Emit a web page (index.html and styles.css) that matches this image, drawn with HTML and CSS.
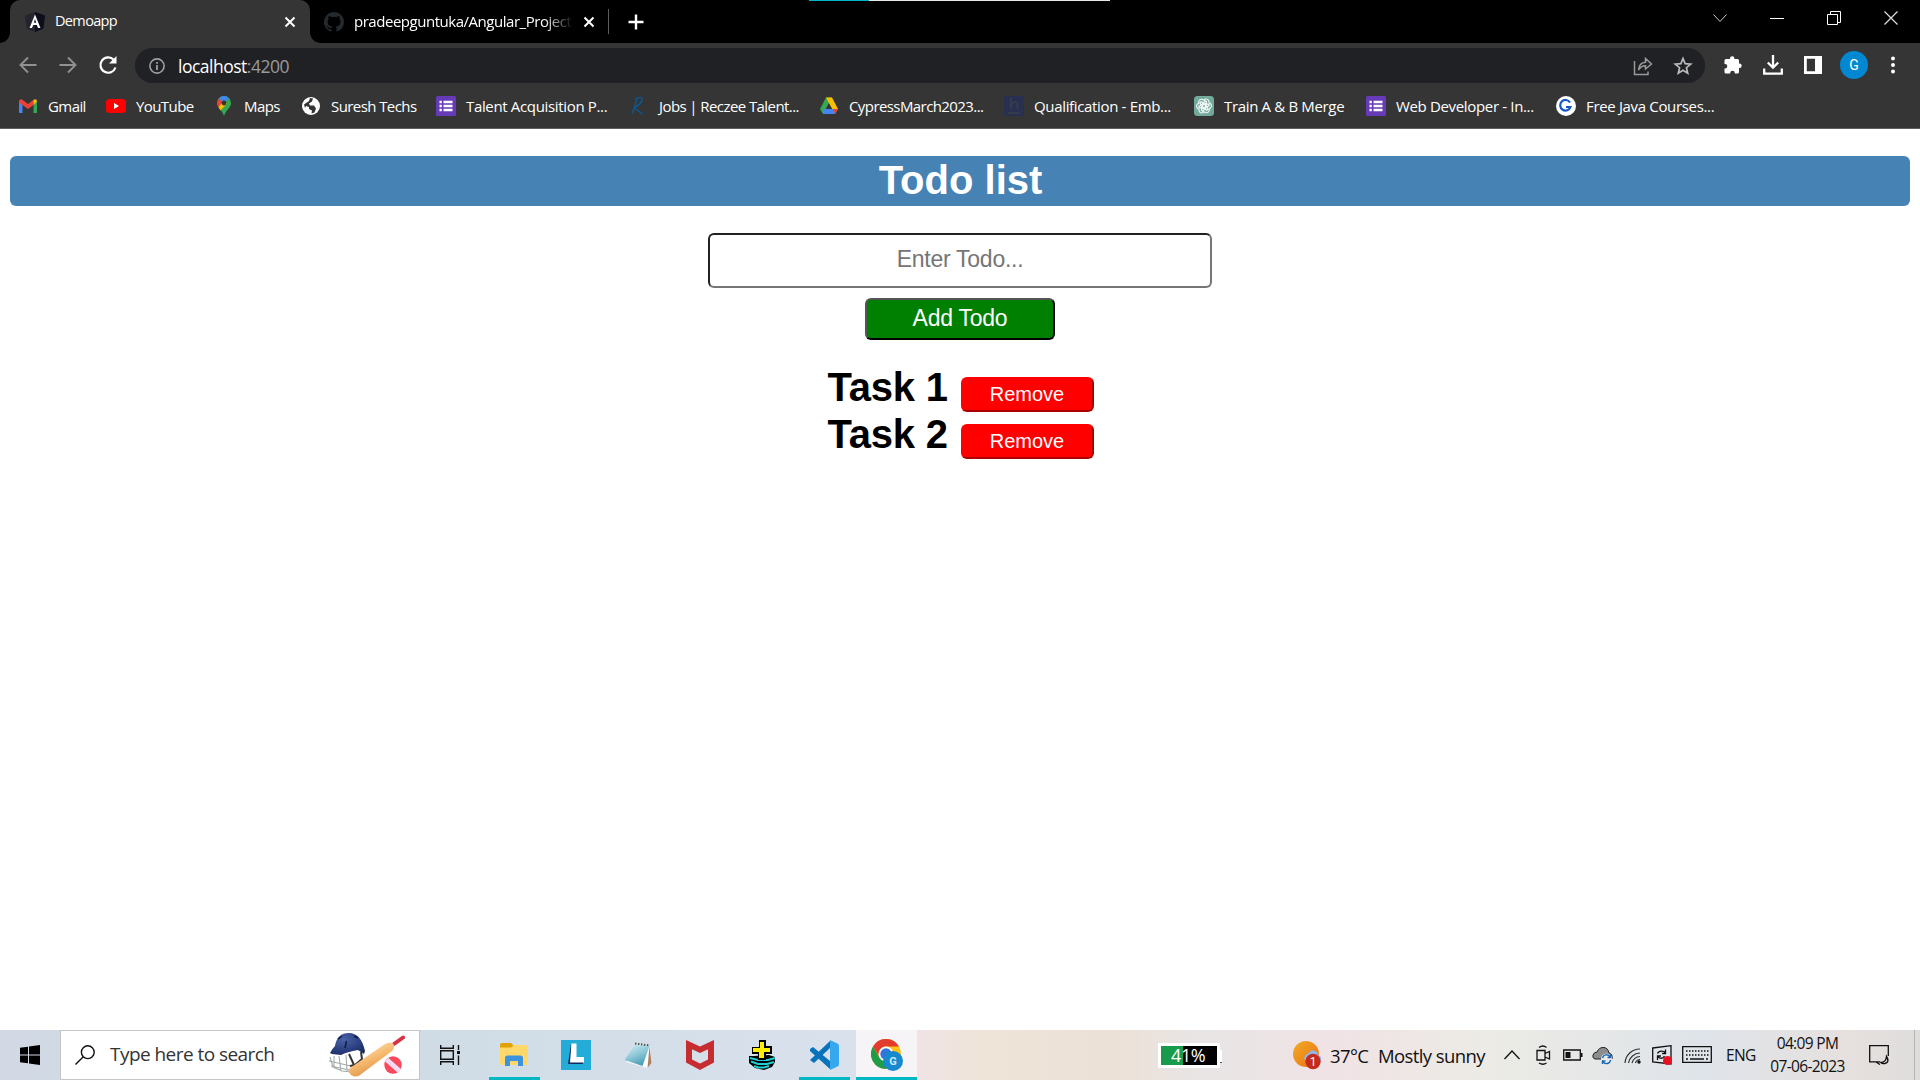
FILE: index.html
```html
<!DOCTYPE html>
<html lang="en">
<head>
<meta charset="utf-8">
<title>Demoapp</title>
<link rel="stylesheet" href="styles.css">
</head>
<body>
<header class="browser">
  <div class="loadbar"></div>
  <div class="tabs">
    <div class="tab active">
      <svg class="fav" width="20" height="20" viewBox="0 0 20 20"><path d="M10 0 20 3.5 18.4 16.500 10 20 1.600 16.500 0 3.500Z" fill="#23242c"/><path d="M10 0 20 3.500 18.400 16.500 10 20Z" fill="#0c0e1b"/><path d="M10 2.500 4.500 16h2.500l1.200-3h3.600l1.200 3h2.500ZM10 7l1.200 3.800H8.800Z" fill="#fff" fill-rule="evenodd"/></svg>
      <span class="tab-title t-demo">Demoapp</span>
      <svg class="x" width="12" height="12" viewBox="0 0 12 12"><path d="M1.500 1.500 10.500 10.500M10.500 1.500 1.500 10.500" stroke="#fff" stroke-width="2"/></svg>
    </div>
    <div class="tab">
      <svg class="fav" width="20" height="20" viewBox="0 0 16 16"><path fill="#24292e" d="M8 0C3.580 0 0 3.580 0 8c0 3.540 2.290 6.530 5.470 7.590.400.070.550-.170.550-.380 0-.190-.010-.820-.010-1.490-2.010.370-2.530-.490-2.690-.940-.090-.230-.480-.940-.820-1.130-.280-.150-.680-.520-.010-.530.630-.010 1.080.580 1.230.820.720 1.210 1.870.870 2.330.660.070-.520.280-.870.510-1.070-1.780-.200-3.640-.890-3.640-3.950 0-.870.310-1.590.820-2.150-.080-.200-.360-1.020.080-2.120 0 0 .670-.210 2.200.820a7.500 7.500 0 0 1 4 0c1.530-1.040 2.200-.820 2.200-.820.440 1.100.160 1.920.080 2.120.510.560.820 1.270.820 2.150 0 3.070-1.870 3.750-3.650 3.950.290.250.540.730.540 1.480 0 1.070-.010 1.930-.010 2.200 0 .210.150.460.550.380A8 8 0 0 0 16 8c0-4.420-3.580-8-8-8Z"/></svg>
      <span class="tab-title t-git">pradeepguntuka/Angular_Project</span>
      <svg class="x" width="12" height="12" viewBox="0 0 12 12"><path d="M1.500 1.500 10.500 10.500M10.500 1.500 1.500 10.500" stroke="#fff" stroke-width="2"/></svg>
    </div>
    <i class="sep"></i>
    <svg class="plus" width="16" height="16" viewBox="0 0 16 16"><path d="M8 0.500V15.500M.500 8H15.500" stroke="#fff" stroke-width="2.400"/></svg>
    <div class="winctl">
      <svg width="14" height="14" viewBox="0 0 14 14"><path d="M.500 3.500 7 10.500 13.500 3.500" fill="none" stroke="#ccc"/></svg>
      <svg width="14" height="14" viewBox="0 0 14 14"><path d="M0 7.500H14" stroke="#fff"/></svg>
      <svg width="14" height="14" viewBox="0 0 14 14"><path d="M.500 3.500h10v10H.500ZM3.500 3V.500h10V11.500H11" fill="none" stroke="#fff"/></svg>
      <svg width="14" height="14" viewBox="0 0 14 14"><path d="M.500.500 13.500 13.500M13.500.500.500 13.500" stroke="#ddd" stroke-width="1.200"/></svg>
    </div>
  </div>
  <div class="toolbar">
    <div class="nav">
      <svg width="20" height="20" viewBox="0 0 20 20"><path d="M18.500 10H3M10 2.500 2.500 10l7.500 7.500" fill="none" stroke="#919191" stroke-width="1.900"/></svg>
      <svg width="20" height="20" viewBox="0 0 20 20"><path d="M1.500 10H17M10 2.500 17.500 10 10 17.500" fill="none" stroke="#919191" stroke-width="1.900"/></svg>
      <svg width="20" height="20" viewBox="0 0 20 20"><path d="M17.500 12.500A7.700 7.700 0 1 1 15.800 4.700" fill="none" stroke="#fff" stroke-width="2.200"/><path d="M18.500 1V8.500H11Z" fill="#fff"/></svg>
    </div>
    <div class="omnibox">
      <svg width="16" height="16" viewBox="0 0 16 16"><circle cx="8" cy="8" r="7.100" fill="none" stroke="#9aa0a6" stroke-width="1.600"/><path d="M8 7v5M8 4v1.800" stroke="#9aa0a6" stroke-width="1.800"/></svg>
      <span class="url">localhost<span>:4200</span></span>
      <svg class="share" width="20" height="20" viewBox="0 0 20 20"><path d="M1.500 5V18.500H15V15.500" fill="none" stroke="#999" stroke-width="1.500"/><path d="M5.500 14C6 9 8.500 6.500 12.500 6.300V2.500L18.500 8l-6 5V9.800C9 9.900 7 11.500 5.500 14Z" fill="none" stroke="#999" stroke-width="1.500"/></svg>
      <svg width="20" height="20" viewBox="0 0 20 20"><path d="M10 2.500 12.100 7.600 17.700 8.100 13.400 11.700 14.700 17.200 10 14.300 5.300 17.200 6.600 11.700 2.300 8.100 7.900 7.600Z" fill="none" stroke="#bbb" stroke-width="1.700"/></svg>
    </div>
    <div class="ext">
      <svg width="20" height="20" viewBox="0 0 20 20"><path d="M7 4V3.500a2.200 2.200 0 0 1 4.400 0V4H14.500Q16 4 16 5.500V8.500h.500a2.200 2.200 0 0 1 0 4.400H16V17q0 1.500-1.500 1.500H11.800V18a2.300 2.300 0 0 0-4.600 0v.500H3Q1.500 18.500 1.500 17V13.500H2a2.300 2.300 0 0 0 0-4.600H1.500V5.500Q1.500 4 3 4Z" fill="#fff"/></svg>
      <svg width="20" height="20" viewBox="0 0 20 20"><path d="M10 0V12M4.800 7.500 10 12.700 15.200 7.500M1.200 13.500V18.700H18.800V13.500" fill="none" stroke="#fff" stroke-width="2.300"/></svg>
      <svg width="20" height="20" viewBox="0 0 20 20"><path d="M1 1H19V19H1ZM3.800 3.800V16.200H12V3.800Z" fill="#fff" fill-rule="evenodd"/></svg>
      <b class="avatar">G</b>
      <svg class="dots" width="20" height="20" viewBox="0 0 20 20"><circle cx="10" cy="3.500" r="2" fill="#fff"/><circle cx="10" cy="10" r="2" fill="#fff"/><circle cx="10" cy="16.500" r="2" fill="#fff"/></svg>
    </div>
  </div>
  <nav class="bookmarks">
    <a class="snug"><svg width="20" height="20" viewBox="0 0 20 20"><path d="M1 4.500V17h3.500V9Z" fill="#4285f4"/><path d="M19 4.500V17h-3.500V9Z" fill="#34a853"/><path d="M1 5Q1.500 2.500 4 3.500L10 8 16 3.500 15.500 9 10 13 1 6.500Z" fill="#ea4335"/><path d="M15.500 4Q18.500 2 19 5.500L15.500 9Z" fill="#fbbc04"/></svg><span>Gmail</span></a>
    <a class="snug"><svg width="20" height="20" viewBox="0 0 20 20"><rect y="3" width="20" height="14" rx="3.500" fill="#f00"/><path d="M8 7v6l5-3Z" fill="#fff"/></svg><span>YouTube</span></a>
    <a class="snug"><svg width="20" height="20" viewBox="0 0 20 20"><path d="M3 7a7 7 0 0 1 14 0C17 12 12 13.500 10 20 8 13.500 3 12 3 7Z" fill="#34a853"/><path d="M5 2.500 10 7 5.500 12Q1.500 8 5 2.500Z" fill="#ea4335"/><path d="M5 2.200A7 7 0 0 1 15 2.200L10 7Z" fill="#4285f4"/><path d="M4.500 11 10 5l3 2.500-6.500 7Z" fill="#fbbc04"/><circle cx="10" cy="7" r="2.400" fill="#353535"/></svg><span>Maps</span></a>
    <a class="snug"><svg width="20" height="20" viewBox="0 0 20 20"><circle cx="10" cy="10" r="9" fill="#fff"/><path d="M3 8.500 8 5l1-3 3 .500-1 3-3 2 1 2h4l2 3-1.500 4-3 1 .5-3-3-1.500V11L5 10l-1 2Z" fill="#353535"/></svg><span>Suresh Techs</span></a>
    <a><svg width="20" height="20" viewBox="0 0 20 20"><rect width="20" height="20" rx="1.500" fill="#673ab7"/><path d="M7.500 6H16.500M7.500 10H16.500M7.500 14H16.500M3.500 6H5.800M3.500 10H5.800M3.500 14H5.800" stroke="#fff" stroke-width="2.300"/></svg><span>Talent Acquisition P...</span></a>
    <a class="snug"><svg width="20" height="20" viewBox="0 0 20 20"><path d="M6 3.500Q14-.500 13 4T5 11.500M8 4 3 18M6 12l8 6.500" fill="none" stroke="#0d5790" stroke-width="1.500"/></svg><span>Jobs | Reczee Talent...</span></a>
    <a class="snug"><svg width="20" height="20" viewBox="0 0 20 20"><path d="M7 1.500H13L4 18 1 13Z" fill="#34a853"/><path d="M7 1.500H13L19 13H13Z" fill="#fbbc04"/><path d="M4 13H19L16 18H4Z" fill="#4285f4"/><path d="M14 13H19L16 18Z" fill="#ea4335"/><path d="M10 7.500 7 13H13Z" fill="#353535"/></svg><span>CypressMarch2023...</span></a>
    <a><svg width="20" height="20" viewBox="0 0 20 20"><rect width="20" height="20" fill="#28304f"/><path d="M7 2V13M7 9Q12 3 13.500 8V13M4 17H16" fill="none" stroke="#353b4c" stroke-width="2"/></svg><span>Qualification - Emb...</span></a>
    <a><svg width="20" height="20" viewBox="0 0 20 20"><rect width="20" height="20" rx="3.500" fill="#74aa9c"/><g fill="none" stroke="#eef6f3" stroke-width="1.100"><path id="petal" d="M10 3.500Q14 2 15 5.500V10L10 12.500 8.500 11.500V7L12 5"/><use href="#petal" transform="rotate(60 10 10)"/><use href="#petal" transform="rotate(120 10 10)"/><use href="#petal" transform="rotate(180 10 10)"/><use href="#petal" transform="rotate(240 10 10)"/><use href="#petal" transform="rotate(300 10 10)"/></g></svg><span>Train A &amp; B Merge</span></a>
    <a><svg width="20" height="20" viewBox="0 0 20 20"><rect width="20" height="20" rx="1.500" fill="#673ab7"/><path d="M7.500 6H16.500M7.500 10H16.500M7.500 14H16.500M3.500 6H5.800M3.500 10H5.800M3.500 14H5.800" stroke="#fff" stroke-width="2.300"/></svg><span>Web Developer - In...</span></a>
    <a><svg width="20" height="20" viewBox="0 0 20 20"><circle cx="10" cy="10" r="10" fill="#fff"/><path d="M14 6.500A5.300 5.300 0 1 0 14.500 11H10" fill="none" stroke="#1457c8" stroke-width="2.200"/></svg><span>Free Java Courses...</span></a>
  </nav>
</header>

<main class="page">
  <h1 class="title">Todo list</h1>
  <input class="todo-input" type="text" placeholder="Enter Todo...">
  <button class="add">Add Todo</button>
  <ul class="tasks">
    <li><span>Task 1</span><button class="remove">Remove</button></li>
    <li><span>Task 2</span><button class="remove">Remove</button></li>
  </ul>
</main>

<footer class="taskbar">
  <div class="start"><svg width="20" height="20" viewBox="0 0 20 20"><path d="M0 2.800 8 1.700V9.500H0ZM9 1.500 20 0V9.500H9ZM0 10.500H8V18.300L0 17.200ZM9 10.500H20V20L9 18.500Z"/></svg></div>
  <div class="search">
    <svg width="20" height="20" viewBox="0 0 20 20"><circle cx="12.800" cy="7.200" r="6.400" fill="none" stroke="#111" stroke-width="1.400"/><path d="M8.300 11.700.500 19.500" stroke="#111" stroke-width="1.400"/></svg>
    <span class="hint">Type here to search</span>
    <svg class="cricket" width="76" height="46" viewBox="0 0 76 46"><defs><linearGradient id="bat" x1="0.300" y1="0.200" x2="0.700" y2="0.900"><stop offset="0" stop-color="#ffd69b"/><stop offset=".5" stop-color="#f3b468"/><stop offset="1" stop-color="#d98f45"/></linearGradient><radialGradient id="helm" cx=".4" cy=".3" r=".8"><stop offset="0" stop-color="#4a64a8"/><stop offset=".6" stop-color="#2b3f80"/><stop offset="1" stop-color="#1c2b5c"/></radialGradient></defs><path d="M1 25 4 35 13 39 22 40M0 29 22 34M5 24V35M10 24 12 39M17 23 18 39M2 34 20 38" fill="none" stroke="#a3aaa9" stroke-width="1.100"/><path d="M32 20 33 27 26 33 21 34M20 22 25 33" fill="none" stroke="#333" stroke-width="2"/><path d="M1 21Q3 17 6 14 8 1 20 1T36 19L35 22 29 18Q18 20 12 23L3 22Z" fill="url(#helm)"/><path d="M17.500 9 16 16M13 4 9 7M25 4 29 6" stroke="#101b3c" stroke-width="1.500"/><path d="M65 12 74 5.500" stroke="#d63445" stroke-width="4" stroke-linecap="round"/><path d="M56 12Q62 9 64.500 12 66 16 63 19L31 43Q27 46 22 43 18 39 21 36Z" fill="url(#bat)"/><circle cx="64" cy="33" r="8.700" fill="#f94a5c"/><path d="M57.500 27.500 70.500 39" stroke="#f7dbf5" stroke-width="5"/></svg>
  </div>
  <div class="taskview"><svg width="20" height="20" viewBox="0 0 20 20" fill="none" stroke="#111" stroke-width="1.400"><path d="M.700 0V3.300H13.300V0M.700 20V16.700H13.300V20M.700 5.700H13.300V14.300H.700ZM18.500 0V5M18.500 10.500V20"/><path d="M17 6h3v3h-3Z" fill="#111" stroke="none"/></svg></div>
  <div class="apps">
    <div class="app running"><svg width="28" height="24" viewBox="0 0 28 24"><path d="M0 2Q0 0 2 0H11L14 3V6H0Z" fill="#e2a100"/><path d="M0 4.500H11L14 2H26Q28 2 28 4V20Q28 22 26 22H2Q0 22 0 20Z" fill="#ffd869"/><path d="M5 23V15Q5 12.500 7.500 12.500H20.500Q23 12.500 23 15V23H18V18H10V23Z" fill="#3c92df"/></svg></div>
    <div class="app"><svg width="30" height="30" viewBox="0 0 30 30"><path d="M0 0H30V30H0Z" fill="#24acd9"/><path d="M10 3.500 7 24H22V22H10Z" fill="#122c62"/><path d="M10.500 3.500H15.500V17H23V22.500H9Z" fill="#fff"/></svg></div>
    <div class="app"><svg width="30" height="28" viewBox="0 0 30 28"><defs><linearGradient id="note" x1="0" y1="0" x2="0.500" y2="1"><stop offset="0" stop-color="#dff2f5"/><stop offset=".6" stop-color="#8ac6d6"/><stop offset="1" stop-color="#4d9fb9"/></linearGradient></defs><path d="M14 3 27 4.500 28.500 22 24.500 27 3 21Z" fill="#fbfbfb"/><path d="M26.500 5 28.500 22 24.500 27Z" fill="#aa8262"/><path d="M12.500 3 26.500 5 19.500 25 1.500 19Z" fill="url(#note)"/><path d="M12 2.500 27 4.500" stroke="#555" stroke-width="2" stroke-dasharray="1.500 1.500"/></svg></div>
    <div class="app"><svg width="28" height="30" viewBox="0 0 28 30"><path d="M0 0 14 6.500 28 0V22.500L14 30 0 22.500ZM6 9.200V19.500L14 23.500 22 19.500V9.200L14 13Z" fill="#c62d31" fill-rule="evenodd"/></svg></div>
    <div class="app"><svg width="30" height="30" viewBox="0 0 30 30"><path d="M2 16H8L22 15 28 17V22L25 27 17 30 8 28 2 23Z" fill="#000"/><path d="M3 18 11 20H21L28 18M4 21.500 11 24H20L27 22M7 26 11 27.500H17L22 26" fill="none" stroke="#20cdd2" stroke-width="2"/><path d="M12 0H19V6H25V14H19V20H11V14H5V7H12Z" fill="#000"/><path d="M13 2H17V8H23V12H17V18H12V12H6V8H13Z" fill="#ffee00"/></svg></div>
    <div class="app running"><svg width="30" height="30" viewBox="0 0 30 30"><path d="M1 20 21 1V8L5 23ZM1 9 4 7 21 21V29L1 11Z" fill="#0873ba"/><path d="M21 0 28.500 3.500Q30 4 30 6V24Q30 26 28.500 26.500L21 30Z" fill="#35a8f0"/></svg></div>
    <div class="app running current"><svg width="32" height="32" viewBox="0 0 32 32"><circle cx="15" cy="15" r="15" fill="#fbc116"/><path d="M2 7.500A15 15 0 0 1 28 7.500H15A7.500 7.500 0 0 0 8.500 18Z" fill="#e33b2e"/><path d="M2 7.500A15 15 0 0 0 15 30L22 18.700 8.500 18.700Z" fill="#209b48"/><circle cx="15" cy="15" r="7.500" fill="#fff"/><circle cx="15" cy="15" r="5.700" fill="#3373dc"/><circle cx="22" cy="22" r="10" fill="#1689cf"/><text x="22" y="26" text-anchor="middle" class="badge">G</text></svg></div>
  </div>
  <div class="power"><i></i><span>41%</span></div>
  <div class="weather">
    <svg width="29" height="29" viewBox="0 0 29 29"><defs><linearGradient id="sun" x1="0" y1="0" x2="1" y2="1"><stop offset="0" stop-color="#f0ad28"/><stop offset="1" stop-color="#ed6e10"/></linearGradient></defs><circle cx="13" cy="13" r="13" fill="url(#sun)"/><path d="M11 18Q12 13 16 12 18 8 22 10 25 11 25 14 29 15 28 20L16 21Z" fill="#8eb9ef"/><circle cx="20" cy="20.500" r="7.700" fill="#c42b1c"/><text x="20" y="25" text-anchor="middle" class="count">1</text></svg>
    <span class="temp">37°C</span><span class="sky">Mostly sunny</span>
  </div>
  <div class="tray">
    <svg width="16" height="20" viewBox="0 0 16 20"><path d="M.500 14 8 6 15.500 14" fill="none" stroke="#111" stroke-width="1.300"/></svg>
    <svg width="16" height="20" viewBox="0 0 16 20"><path d="M2 5.500H10V15H2ZM10 8.500 14.500 6.500V14L10 12M4 2.500Q8-.500 11.500 2.500M4 18Q8 20.500 11.500 18" fill="none" stroke="#111" stroke-width="1.300"/></svg>
    <svg width="20" height="20" viewBox="0 0 20 20"><path d="M.700 5H17.300V15H.700Z" fill="none" stroke="#111" stroke-width="1.300"/><path d="M2.500 7H7.500V13H2.500ZM18 8H19.500V12H18Z" fill="#111"/></svg>
    <svg width="22" height="20" viewBox="0 0 22 20"><path d="M3 14Q0 13 1 10 2 7 5 7 7 2 12 2.500 16 3 17 8 21 9 20 14Z" fill="#8c8c8c" stroke="#222"/><circle cx="14.500" cy="14" r="5.500" fill="#eaeaea"/><path d="M10.500 13A4 4 0 0 1 18 12M18.500 9.500V12.500H15.500M18.500 15A4 4 0 0 1 11 16.500M10.500 19V16H13.500" fill="none" stroke="#1767b6" stroke-width="1.400"/></svg>
    <svg width="18" height="20" viewBox="0 0 18 20"><path d="M1 18A15 15 0 0 1 16 4M4.500 18A12 12 0 0 1 16 8M8 18A9 9 0 0 1 16 11.500M11.500 18A5 5 0 0 1 16 14.500" fill="none" stroke="#333" stroke-width="1.200"/><circle cx="15" cy="17" r="1.700" fill="#111"/></svg>
    <svg width="20" height="20" viewBox="0 0 20 20"><path d="M.700 3 19 .700V19L.700 17Z" fill="none" stroke="#111" stroke-width="1.300"/><path d="M5.500 8.500Q7 5 12 6.500L13 8M13.500 4.500V8.500H10M12.500 11Q11 14 7.500 13L6 11.500M5.500 15V11H9" fill="none" stroke="#111" stroke-width="1.300"/><circle cx="15.500" cy="15.500" r="4.500" fill="#e81123"/></svg>
    <svg width="30" height="18" viewBox="0 0 30 18"><path d="M.700.700H29.300V16.300H.700Z" fill="none" stroke="#111" stroke-width="1.300"/><path d="M4 5H27M4 9H27" stroke="#111" stroke-width="1.500" stroke-dasharray="1.500 1.500"/><path d="M4 13H6M8 13H22M24 13H26" stroke="#111" stroke-width="1.300"/></svg>
    <span class="lang">ENG</span>
    <div class="clock"><span class="time">04:09 PM</span><span class="date">07-06-2023</span></div>
    <svg width="21" height="20" viewBox="0 0 21 20"><path d="M11 16.800 8 16.800H.700V.700H19.300V11M7 17 11 19.500" fill="none" stroke="#111" stroke-width="1.300"/><path d="M17.500 11.500Q21 17 16 18.500 13 19 12 17.500 17 17.500 17.500 11.500Z" fill="none" stroke="#111" stroke-width="1.400"/></svg>
    <i class="peek"></i>
  </div>
</footer>
</body>
</html>
```
FILE: styles.css
```css
* { box-sizing: border-box; }
body {
  margin: 0;
  width: 1920px;
  height: 1080px;
  display: flex;
  flex-direction: column;
  overflow: hidden;
  background: #fff;
  font-family: "Open Sans", "Noto Sans", sans-serif;
}
svg { display: block; flex: none; }
span { white-space: nowrap; }

/* browser frame */
.browser {
  position: relative;
  height: 129px;
  background: #353535;
  border-bottom: 1px solid #606060;
  color: #fff;
}
.loadbar {
  position: absolute;
  left: 809px;
  top: 0;
  width: 301px;
  height: 1px;
  background: linear-gradient(90deg, #00b7c3 60px, #e8e8e8 60px);
}
.tabs {
  display: flex;
  align-items: center;
  height: 43px;
  padding-left: 10px;
  background: #000;
}
.tab {
  display: flex;
  align-items: center;
  width: 298px;
  height: 43px;
  padding: 0 10px 0 14px;
}
.tab.active {
  position: relative;
  width: 300px;
  padding: 0 14px 0 15px;
  background: #353535;
  border-radius: 10px 10px 0 0;
}
.tab.active::before, .tab.active::after {
  content: "";
  position: absolute;
  bottom: 0;
  width: 10px;
  height: 10px;
}
.tab.active::before { left: -10px; background: radial-gradient(circle at 0 0, #000 9.5px, #353535 10px); }
.tab.active::after { right: -10px; background: radial-gradient(circle at 100% 0, #000 9.5px, #353535 10px); }
.tab-title { line-height: 20px; padding-bottom: 1px; margin-left: 10px; flex: none; }
.t-demo { width: 67px; font-size: 14.5px; letter-spacing: -0.65px; }
.t-git {
  width: 219px;
  overflow: hidden;
  font-size: 15px;
  letter-spacing: -0.47px;
  -webkit-mask-image: linear-gradient(90deg, #000 190px, transparent 219px);
  mask-image: linear-gradient(90deg, #000 190px, transparent 219px);
}
.tab .x { margin-left: auto; }
.tab:not(.active) .x { margin-left: 10px; }
.sep { width: 1px; height: 25px; background: #5c5c5c; }
.plus { margin-left: 19px; }
.winctl { display: flex; gap: 43px; margin: -7px 22px 0 auto; }

.toolbar { display: flex; align-items: center; height: 45px; }
.nav { display: flex; gap: 20px; width: 135px; padding: 0 0 1px 18px; }
.omnibox {
  display: flex;
  align-items: center;
  width: 1570px;
  height: 35px;
  padding: 0 12px 0 14px;
  border-radius: 18px;
  background: #202124;
}
.url { margin-left: 13px; font-size: 17.5px; letter-spacing: -0.5px; }
.url span { color: #9a9a9a; }
.share { margin: 0 20px 0 auto; }
.ext { display: flex; align-items: center; gap: 20px; padding: 0 0 1px 18px; }
.avatar {
  width: 28px;
  height: 28px;
  margin: 0 -4px 0 -3px;
  border-radius: 50%;
  background: #0288d1;
  font: 14px/28px Roboto, sans-serif;
  text-align: center;
}
.dots { margin-left: -1px; }

.bookmarks {
  display: grid;
  grid-template-columns: 88px 108px 87px 135px 193px 190px 185px 190px 172px 190px 180px;
  align-items: center;
  height: 35px;
  padding-left: 18px;
}
.bookmarks a { display: flex; align-items: center; gap: 10px; font-size: 15px; line-height: 20px; letter-spacing: -0.34px; }
.bookmarks .snug { letter-spacing: -0.58px; }

/* todo page */
.page {
  flex: 1;
  display: flex;
  flex-direction: column;
  align-items: center;
  padding: 27px 10px 0;
  font-family: "Liberation Sans", Arial, sans-serif;
}
.title {
  width: 1900px;
  height: 50px;
  margin: 0;
  padding-left: 1px;
  border-radius: 6px;
  background: #4682b4;
  color: #fff;
  font-size: 40px;
  line-height: 49px;
  text-align: center;
}
.todo-input {
  width: 504px;
  height: 55px;
  margin: 27px 0 10px;
  padding: 0 0 2px;
  border: 2px inset #767676;
  border-radius: 6px;
  font: 23px "Liberation Sans", Arial, sans-serif;
  letter-spacing: -0.25px;
  text-align: center;
}
.todo-input::placeholder { color: #757575; }
.add {
  width: 190px;
  height: 42px;
  padding: 0 0 2px;
  border: 2px outset #000;
  border-radius: 6px;
  background: #008000;
  color: #fff;
  font: 23px "Liberation Sans", Arial, sans-serif;
  letter-spacing: -0.25px;
}
.tasks { margin: 24px 0 0; padding: 0; list-style: none; }
.tasks li { display: flex; align-items: flex-start; height: 47px; padding-left: 1px; }
.tasks li span { width: 133px; font-size: 40px; font-weight: 700; line-height: 46px; letter-spacing: -0.2px; }
.remove {
  width: 133px;
  height: 35px;
  margin-top: 13px;
  padding: 0;
  border: 2px outset #f00;
  border-radius: 6px;
  background: #f00;
  color: #fff;
  font: 20px "Liberation Sans", Arial, sans-serif;
}

/* taskbar */
.taskbar {
  display: flex;
  align-items: center;
  height: 50px;
  background: linear-gradient(90deg, #d2d9e5 0, #cfdce6 420px, #d9e1ec 850px, #f0e3e5 920px, #efe4d8 985px, #ece1d6 1110px, #e8e5e5 1200px, #f0e3e5 1335px, #ecebe5 1490px, #dfe4ea 1700px, #e6e0de 1850px, #dedddc 1920px);
  color: #111;
}
.start { width: 60px; padding-left: 20px; }
.search {
  display: flex;
  align-items: center;
  width: 360px;
  height: 50px;
  padding: 0 14px 0 14px;
  border: 1px solid #c5c5c8;
  background: #fff;
}
.hint { margin-left: 15px; padding-bottom: 2px; font-size: 19px; letter-spacing: -0.55px; color: #333; }
.cricket { margin-left: auto; }
.taskview { width: 63px; padding-left: 20px; }
.apps { display: flex; height: 50px; }
.app { position: relative; display: flex; align-items: center; justify-content: center; width: 62px; }
.app.running::after {
  content: "";
  position: absolute;
  bottom: 0;
  left: 6px;
  width: 51px;
  height: 3px;
  background: #00b7c3;
}
.app.current { width: 61px; margin-left: 1px; background: #f7f4f7; }
.app.current::after { left: 0; width: 61px; }
.badge { font: bold 11px Roboto, sans-serif; fill: #cfeaff; }
.power {
  display: flex;
  position: relative;
  width: 62px;
  height: 25px;
  margin-left: 241px;
  border: 3px solid #fff;
  background: #000;
}
.power::after {
  content: "";
  position: absolute;
  right: -5px;
  top: 4px;
  width: 2px;
  height: 12px;
  background: #fff;
  border-bottom: 1px solid #555;
}
.power i { width: 22px; background: #189b4b; }
.power span { position: absolute; left: 10px; top: -3px; font-size: 18px; line-height: 24px; letter-spacing: -0.4px; color: #fff; }
.weather { display: flex; align-items: center; margin-left: 73px; width: 211px; }
.count { font: 12px Roboto, sans-serif; fill: #fff; }
.weather span { font-size: 18.5px; letter-spacing: -0.6px; }
.temp { width: 48px; margin-left: 8px; }
.tray {
  display: grid;
  grid-template-columns: 31px 28px 29px 32px 28px 30px 44px 31px 112px 45px 6px;
  align-items: center;
}
.lang { font-size: 15.5px; letter-spacing: -0.6px; }
.clock { display: flex; flex-direction: column; align-items: center; width: 101px; font-size: 15.5px; line-height: 23px; letter-spacing: -0.65px; }
.peek { height: 50px; border-left: 1px solid #b5b5b5; }
```
